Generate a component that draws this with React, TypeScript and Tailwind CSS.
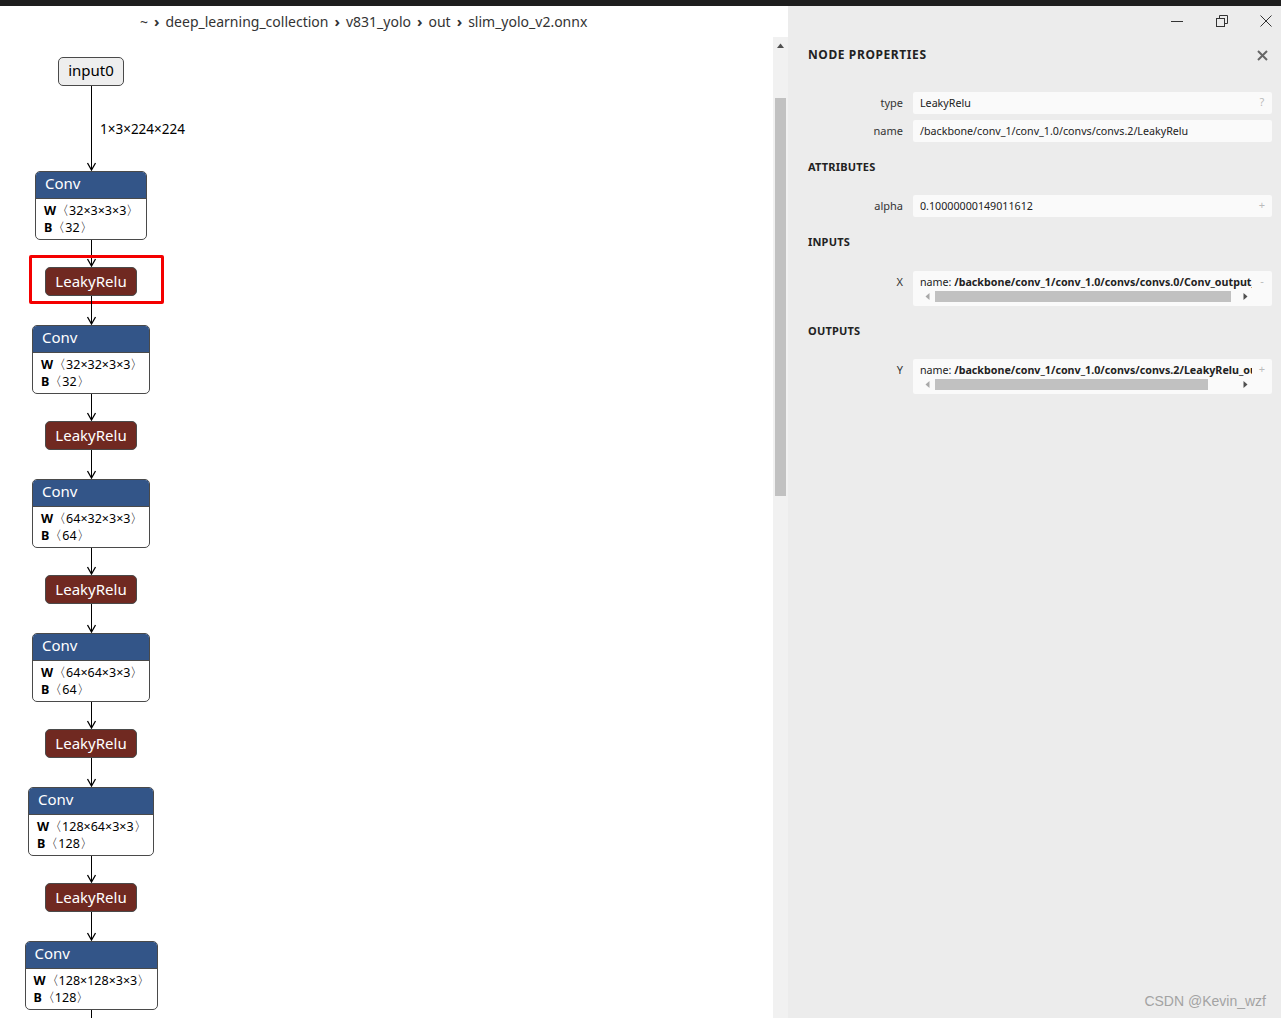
import React from "react"

const CONVS = [
  { w: "w-[112px]", W: "32×3×3×3", B: "32" },
  { w: "w-[118px]", W: "32×32×3×3", B: "32" },
  { w: "w-[118px]", W: "64×32×3×3", B: "64" },
  { w: "w-[118px]", W: "64×64×3×3", B: "64" },
  { w: "w-[126px]", W: "128×64×3×3", B: "128" },
  { w: "w-[133px]", W: "128×128×3×3", B: "128" },
]

function Edge({ h, label }: { h: number; label?: string }) {
  return (
    <div className="relative flex justify-center">
      <svg width="12" height={h} className="block">
        <line x1="6.5" y1="0" x2="6.5" y2={h - 1} stroke="#000" strokeWidth="1" />
        <path d={`M2.5 ${h - 8} L6.5 ${h - 1} L10.5 ${h - 8}`} fill="none" stroke="#000" strokeWidth="1.3" />
      </svg>
      {label && (
        <span className="absolute left-[15px] top-[35px] whitespace-nowrap text-[13.5px] leading-[16px] text-black">
          {label}
        </span>
      )}
    </div>
  )
}

function ConvNode({ w, W, B }: { w: string; W: string; B: string }) {
  return (
    <div className={`${w} flex h-[69px] flex-col overflow-hidden rounded-[5px] border border-[#4a4a4a] bg-white`}>
      <div className="h-[27px] shrink-0 border-b border-[#4a4a4a] bg-[#335588] pl-[9px] text-[15px] leading-[23px] text-white">
        Conv
      </div>
      <div className="pl-[8px] pt-[3px] text-[12.5px] leading-[17px] text-black">
        <div className="whitespace-nowrap">
          <b>W</b>〈{W}〉
        </div>
        <div className="whitespace-nowrap">
          <b>B</b>〈{B}〉
        </div>
      </div>
    </div>
  )
}

function ReluNode({ selected }: { selected?: boolean }) {
  return (
    <div className="relative">
      <div className="flex h-[29px] w-[92px] items-center justify-center rounded-[5px] border border-[#4a4a4a] bg-[#702921] text-[15px] text-white">
        LeakyRelu
      </div>
      {selected && (
        <div className="absolute -bottom-[8px] -left-[16px] -right-[27px] -top-[12px] rounded-[2px] border-[3px] border-[#f40000]" />
      )}
    </div>
  )
}

function Graph() {
  return (
    <div className="mt-[21px] flex w-[182px] flex-col items-center">
      <div className="flex h-[29px] w-[66px] items-center justify-center rounded-[5px] border border-[#4a4a4a] bg-[#eeeeee] pb-[2px] text-[15px] text-black">
        input0
      </div>
      <Edge h={85} label="1×3×224×224" />
      {CONVS.map((c, i) => (
        <React.Fragment key={i}>
          <ConvNode {...c} />
          {i < CONVS.length - 1 ? (
            <>
              <Edge h={27} />
              <ReluNode selected={i === 0} />
              <Edge h={29} />
            </>
          ) : (
            <Edge h={40} />
          )}
        </React.Fragment>
      ))}
    </div>
  )
}

function Chevron() {
  return <span className="mx-[6px] text-[15px] font-bold text-[#333]">›</span>
}

function HScroll({ thumb }: { thumb: string }) {
  return (
    <div className="mt-[2px] flex h-[11px] items-center">
      <div className="flex w-[14px] shrink-0 justify-center">
        <svg width="5" height="7" viewBox="0 0 5 7">
          <path d="M4.5 0 L0.5 3.5 L4.5 7 Z" fill="#a8a8a8" />
        </svg>
      </div>
      <div className="flex h-[11px] min-w-0 flex-1 items-center px-[1px]">
        <div className={`${thumb} h-[11px] bg-[#c1c1c1]`} />
      </div>
      <div className="flex w-[14px] shrink-0 justify-center">
        <svg width="5" height="7" viewBox="0 0 5 7">
          <path d="M0.5 0 L4.5 3.5 L0.5 7 Z" fill="#505050" />
        </svg>
      </div>
    </div>
  )
}

function Row({
  label,
  mark,
  className,
  children,
}: {
  label: string
  mark?: string
  className?: string
  children: React.ReactNode
}) {
  return (
    <div className={`flex ${className ?? ""}`}>
      <div className="w-[95px] shrink-0 pt-[4px] text-right text-[11px] leading-[14px] text-[#333]">{label}</div>
      <div className="ml-[10px] flex min-w-0 flex-1 rounded-[2px] bg-[#fafafa]">
        <div className="min-w-0 flex-1 overflow-hidden pb-[4px] pl-[7px] pt-[4px] text-[10.7px] leading-[14px] text-[#222]">
          {children}
        </div>
        <div className="w-[20px] shrink-0 pt-[3px] text-center text-[11px] leading-[14px] text-[#bbb]">{mark}</div>
      </div>
    </div>
  )
}

function Heading({ children, className }: { children: React.ReactNode; className?: string }) {
  return (
    <div className={`h-[16px] text-[11px] font-bold leading-[16px] tracking-[0.2px] text-[#222] ${className ?? ""}`}>
      {children}
    </div>
  )
}

function Panel() {
  return (
    <div className="flex min-w-0 flex-1 flex-col overflow-hidden bg-[#ececec] pl-[20px] pr-[9px]">
      <div className="flex h-[30px] shrink-0 items-center justify-end gap-[33px]">
        <svg width="12" height="12" viewBox="0 0 12 12">
          <line x1="0" y1="6.5" x2="12" y2="6.5" stroke="#333" strokeWidth="1" />
        </svg>
        <svg width="12" height="12" viewBox="0 0 12 12">
          <rect x="0.5" y="3.5" width="8" height="8" fill="none" stroke="#333" strokeWidth="1" />
          <path d="M3.5 3.5 V0.5 H11.5 V8.5 H8.5" fill="none" stroke="#333" strokeWidth="1" />
        </svg>
        <svg width="12" height="12" viewBox="0 0 12 12" className="-ml-[1px]">
          <path d="M0.5 0.5 L11.5 11.5 M11.5 0.5 L0.5 11.5" stroke="#333" strokeWidth="1" />
        </svg>
      </div>
      <div className="mt-[9px] flex h-[20px] shrink-0 items-center justify-between">
        <div className="text-[12px] font-bold tracking-[0.6px] text-[#222]">NODE PROPERTIES</div>
        <svg width="11" height="11" viewBox="0 0 11 11" className="mr-[4px]">
          <path d="M1 1 L10 10 M10 1 L1 10" stroke="#666" strokeWidth="2" />
        </svg>
      </div>
      <Row label="type" mark="?" className="mt-[27px]">
        LeakyRelu
      </Row>
      <Row label="name" className="mt-[6px]">
        <div className="whitespace-nowrap">/backbone/conv_1/conv_1.0/convs/convs.2/LeakyRelu</div>
      </Row>
      <Heading className="mt-[17px]">ATTRIBUTES</Heading>
      <Row label="alpha" mark="+" className="mt-[20px]">
        0.10000000149011612
      </Row>
      <Heading className="mt-[17px]">INPUTS</Heading>
      <Row label="X" mark="-" className="mt-[21px]">
        <div className="overflow-hidden whitespace-nowrap">
          name: <b>/backbone/conv_1/conv_1.0/convs/convs.0/Conv_output_0</b>
        </div>
        <HScroll thumb="w-[296px]" />
      </Row>
      <Heading className="mt-[17px]">OUTPUTS</Heading>
      <Row label="Y" mark="+" className="mt-[20px]">
        <div className="overflow-hidden whitespace-nowrap">
          name: <b>/backbone/conv_1/conv_1.0/convs/convs.2/LeakyRelu_output_0</b>
        </div>
        <HScroll thumb="w-[273px]" />
      </Row>
    </div>
  )
}

export default function App() {
  return (
    <div className="relative flex h-[1018px] w-[1281px] flex-col overflow-hidden bg-white font-['Noto_Sans','Open_Sans',sans-serif]">
      <div className="h-[6px] shrink-0 bg-[#1e1e1e]" />
      <div className="flex min-h-0 flex-1">
        <div className="flex w-[773px] shrink-0 flex-col overflow-hidden bg-white">
          <div className="h-[30px] pl-[140px] text-[14px] leading-[30px] text-[#333]">
            ~<Chevron />deep_learning_collection<Chevron />v831_yolo<Chevron />out<Chevron />slim_yolo_v2.onnx
          </div>
          <Graph />
        </div>
        <div className="flex w-[15px] shrink-0 flex-col bg-white">
          <div className="mt-[31px] flex flex-1 flex-col items-center bg-[#f1f1f1]">
            <svg width="7" height="5" viewBox="0 0 7 5" className="mt-[6px]">
              <path d="M0 5 L3.5 0.5 L7 5 Z" fill="#505050" />
            </svg>
            <div className="mt-[50px] h-[398px] w-[11px] bg-[#c1c1c1]" />
          </div>
        </div>
        <Panel />
      </div>
      <div className="absolute bottom-[6px] right-[15px] font-['Liberation_Sans',sans-serif] text-[14px] text-[#a3a3a3]">
        CSDN @Kevin_wzf
      </div>
    </div>
  )
}
